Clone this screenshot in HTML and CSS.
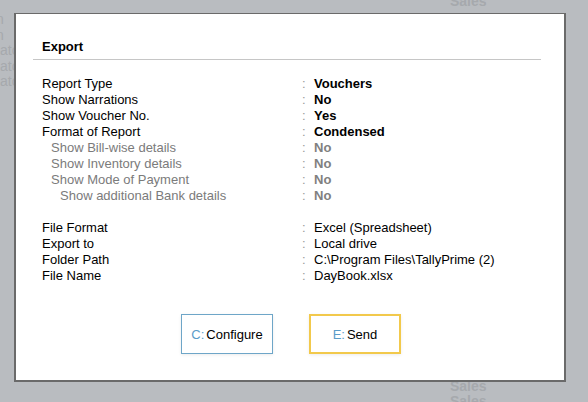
FILE: index.html
```html
<!DOCTYPE html>
<html>
<head>
<meta charset="utf-8">
<link rel="stylesheet" href="styles.css">
</head>
<body>
<div class="backdrop">
  <div class="bg-left">
    <div class="cut">n</div>
    <div class="cut">n</div>
    <div>ato</div>
    <div>ato</div>
    <div>ato</div>
  </div>
  <div class="bg-sales top">Sales</div>
  <div class="bg-sales bottom"><div>Sales</div><div>Sales</div></div>
</div>

<div class="dialog">
  <div class="title">Export</div>

  <div class="rows">
    <div class="row"><span class="lbl">Report Type</span><span class="col">:</span><span class="val b">Vouchers</span></div>
    <div class="row"><span class="lbl">Show Narrations</span><span class="col">:</span><span class="val b">No</span></div>
    <div class="row"><span class="lbl">Show Voucher No.</span><span class="col">:</span><span class="val b">Yes</span></div>
    <div class="row"><span class="lbl">Format of Report</span><span class="col">:</span><span class="val b">Condensed</span></div>
    <div class="row dim"><span class="lbl i1">Show Bill-wise details</span><span class="col">:</span><span class="val b">No</span></div>
    <div class="row dim"><span class="lbl i1">Show Inventory details</span><span class="col">:</span><span class="val b">No</span></div>
    <div class="row dim"><span class="lbl i1">Show Mode of Payment</span><span class="col">:</span><span class="val b">No</span></div>
    <div class="row dim"><span class="lbl i2">Show additional Bank details</span><span class="col">:</span><span class="val b">No</span></div>
  </div>

  <div class="rows second">
    <div class="row"><span class="lbl">File Format</span><span class="col">:</span><span class="val">Excel (Spreadsheet)</span></div>
    <div class="row"><span class="lbl">Export to</span><span class="col">:</span><span class="val">Local drive</span></div>
    <div class="row"><span class="lbl">Folder Path</span><span class="col">:</span><span class="val">C:\Program Files\TallyPrime (2)</span></div>
    <div class="row"><span class="lbl">File Name</span><span class="col">:</span><span class="val">DayBook.xlsx</span></div>
  </div>

  <div class="buttons">
    <div class="btn configure"><span class="key">C:</span>Configure</div>
    <div class="btn send"><span class="key">E:</span>Send</div>
  </div>
</div>
</body>
</html>
```

FILE: styles.css
```css
html, body {
  margin: 0;
  padding: 0;
}
body {
  width: 588px;
  height: 402px;
  overflow: hidden;
  background: #b9bcc0;
  font-family: "Liberation Sans", Arial, sans-serif;
  font-size: 13px;
  position: relative;
}

.backdrop {
  position: relative;
  width: 588px;
  height: 402px;
  color: #a6a9ad;
}
.bg-left {
  display: flex;
  flex-direction: column;
  padding-top: 12px;
  line-height: 15.5px;
  font-size: 14px;
}
.bg-left div {
  white-space: nowrap;
}
.bg-left .cut {
  margin-left: -4px;
}
.bg-sales {
  position: absolute;
  left: 450px;
  font-weight: bold;
  font-size: 14px;
  line-height: 15px;
}
.bg-sales.top { top: -6px; }
.bg-sales.bottom { top: 379px; }

.dialog {
  position: absolute;
  left: 14px;
  top: 13px;
  width: 548px;
  height: 366px;
  background: #ffffff;
  border: 2px solid #6a6a6a;
  border-top-width: 1.5px;
  color: #000;
}

.title {
  margin: 25px 23px 0 17px;
  padding: 0 0 4px 9px;
  line-height: 16px;
  font-weight: bold;
  border-bottom: 1px solid #c6c6c6;
}

.rows {
  margin-top: 16px;
  padding-left: 26px;
  display: flex;
  flex-direction: column;
}
.rows.second {
  margin-top: 16px;
}
.row {
  display: flex;
  line-height: 16px;
  height: 16px;
  white-space: nowrap;
}
.lbl {
  width: 260px;
  flex: none;
}
.lbl.i1 { padding-left: 9px; width: 251px; }
.lbl.i2 { padding-left: 18px; width: 242px; }
.col {
  width: 12px;
  flex: none;
  color: #9a9a9a;
}
.val.b { font-weight: bold; }
.row.dim { color: #7b7b7b; }
.row.dim .val { color: #808080; }

.buttons {
  display: flex;
  justify-content: center;
  gap: 36px;
  margin-top: 30px;
  padding-left: 2px;
}
.btn {
  box-sizing: border-box;
  width: 92px;
  height: 40px;
  display: flex;
  align-items: center;
  justify-content: center;
  background: #fff;
  box-shadow: 0 1px 3px rgba(0, 0, 0, 0.08);
}
.btn .key {
  color: #5a9cc9;
  margin-right: 2px;
}
.configure {
  border: 1.5px solid #6ea6c8;
}
.send {
  border: 2px solid #f2c94c;
}
```
